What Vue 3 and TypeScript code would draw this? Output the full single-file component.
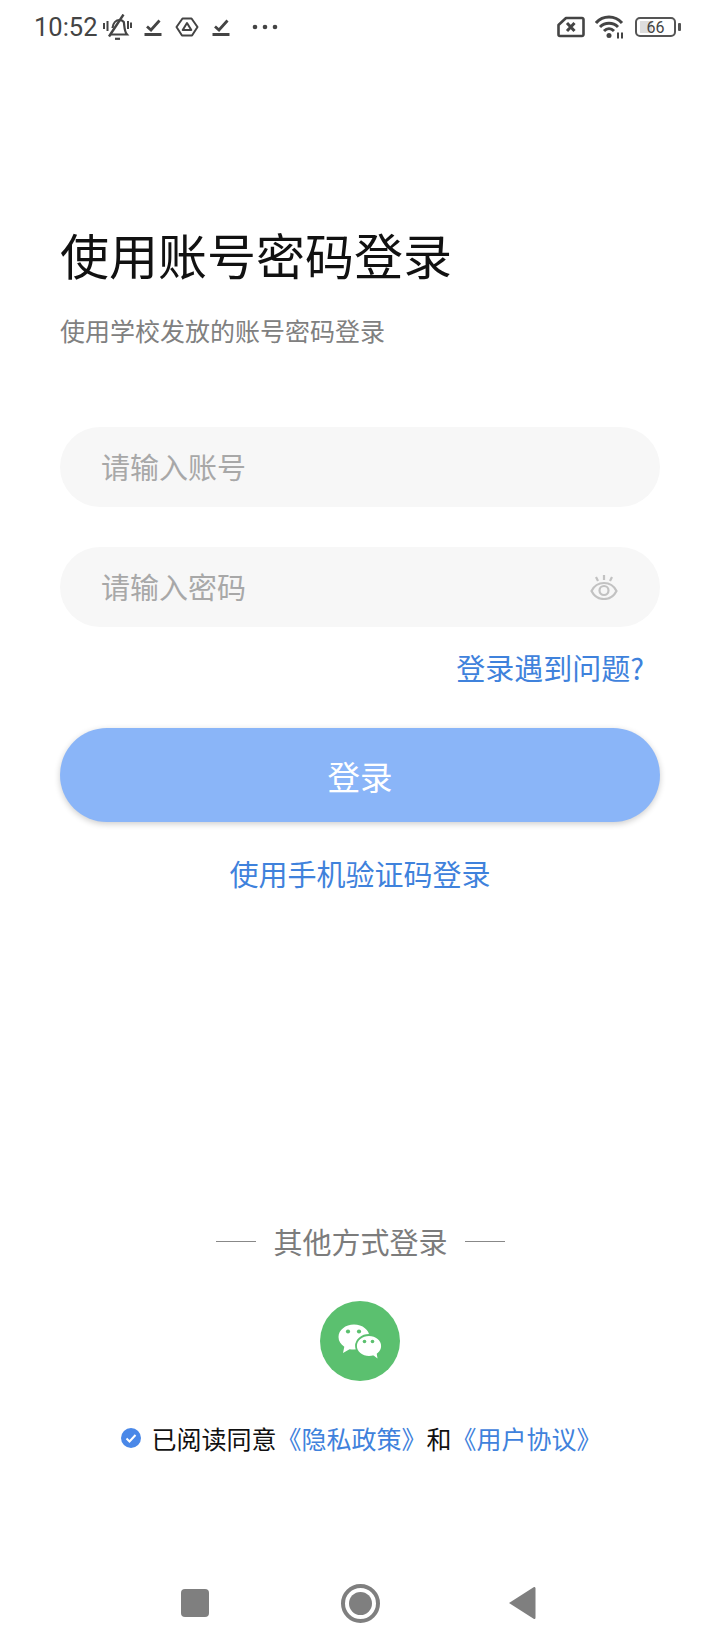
<script setup lang="ts">
// login screen, static
</script>

<template>
  <div class="page">
    <div class="status">
      <span class="time">10:52</span>
      <svg class="bell" width="30" height="26" viewBox="0 0 30 26">
        <g fill="none" stroke="#444">
          <path d="M10.500 14c.5-5 3.500-8 7-8 2 0 3.300.8 4.300 2 .8 4 .2 9 3.200 12.500H8.500" stroke-width="2.200"/>
          <path d="M21.500 .5 7 22.500" stroke-width="2.400"/>
          <path d="M13 24.800h5" stroke-width="2.200"/>
          <path d="M2 9v6M5.500 7v10M26 7v8M29 8.500v5.500" stroke-width="2"/>
        </g>
      </svg>
      <svg class="check" width="20" height="20" viewBox="0 0 20 20"><path d="M4 9.500l4 3.500L16.500 3.500" fill="none" stroke="#444" stroke-width="2.800"/><path d="M1.500 17.500h17" stroke="#444" stroke-width="3"/></svg>
      <svg class="tri" width="24" height="24" viewBox="0 0 24 24"><path d="M7.500 3.500h9l6 8.500-5.500 8.500H7L1.500 12z" fill="none" stroke="#444" stroke-width="2" stroke-linejoin="round"/><path d="M12 8l4.300 7H7.700z" fill="none" stroke="#444" stroke-width="2" stroke-linejoin="round"/></svg>
      <svg class="check2" width="20" height="20" viewBox="0 0 20 20"><path d="M4 9.500l4 3.500L16.500 3.500" fill="none" stroke="#444" stroke-width="2.800"/><path d="M1.500 17.500h17" stroke="#444" stroke-width="3"/></svg>
      <svg class="dots" width="26" height="8" viewBox="0 0 26 8"><circle cx="3" cy="4" r="2.300" fill="#444"/><circle cx="13" cy="4" r="2.300" fill="#444"/><circle cx="23" cy="4" r="2.300" fill="#444"/></svg>
      <div class="spacer"></div>
      <svg width="28" height="22" viewBox="0 0 28 22"><path d="M9 2h16a1.500 1.500 0 0 1 1.500 1.500v15a1.500 1.500 0 0 1-1.500 1.500H3a1.500 1.500 0 0 1-1.500-1.500V9z" fill="none" stroke="#444" stroke-width="2.600" stroke-linejoin="round"/><path d="M10 7l7.500 8M17.500 7L10 15" stroke="#444" stroke-width="3"/></svg>
      <svg class="wifi" width="30" height="24" viewBox="0 0 30 24"><path d="M1 8C8 0 20 0 27 8M5 12c5-5 13-5 18 0M9 16c3-3 7-3 10 0" fill="none" stroke="#444" stroke-width="3"/><circle cx="14" cy="20.500" r="2.500" fill="#444"/><path d="M23 17.500v6M27 17.500v6" stroke="#444" stroke-width="2"/></svg>
      <div class="battery"><span class="fill"></span><span class="lvl">66</span></div>
      <span class="nub"></span>
    </div>

    <main class="main">
      <h1 class="title">使用账号密码登录</h1>
      <p class="sub">使用学校发放的账号密码登录</p>
      <div class="field first"><span>请输入账号</span></div>
      <div class="field second">
        <span>请输入密码</span>
        <svg width="28" height="26" viewBox="0 0 28 26"><g fill="none" stroke="#c2c2c2" stroke-width="2.200"><path d="M1.500 17C4 12 9 9 14 9s10 3 12.500 8C24 22 19 25 14 25S4 22 1.500 17z"/><circle cx="14" cy="16.500" r="4.500"/><path d="M14 1v5M6 3l2 4M22 3l-2 4"/></g></svg>
      </div>
      <a class="trouble">登录遇到问题?</a>
      <button class="login">登录</button>
      <a class="sms">使用手机验证码登录</a>
    </main>

    <section class="other">
      <div class="divider"><i></i><span>其他方式登录</span><i></i></div>
      <div class="wechat">
        <svg width="44" height="35" viewBox="0 0 44 35">
          <path d="M16 .5C7.500.5.500 6 .500 13c0 4 2.300 7.400 5.800 9.700L5 29l6.500-3.700c1.400.2 3 .3 4.500.3 8.500 0 15.500-5.600 15.500-12.600S24.500.5 16 .5z" fill="#fff"/>
          <ellipse cx="31" cy="22" rx="13" ry="11" fill="#fff" stroke="#5bc06f" stroke-width="1.800"/>
          <path d="M35 31l4.500 3.500-1-6z" fill="#fff"/>
          <circle cx="10" cy="7.500" r="2.100" fill="#5bc06f"/><circle cx="21" cy="7.500" r="2.100" fill="#5bc06f"/>
          <circle cx="26.500" cy="17.500" r="1.800" fill="#5bc06f"/><circle cx="34.500" cy="17.500" r="1.800" fill="#5bc06f"/>
        </svg>
      </div>
      <div class="agree">
        <svg width="20" height="20" viewBox="0 0 20 20"><circle cx="10" cy="10" r="10" fill="#4a88e8"/><path d="M5.500 10.500l3 3L14.500 7" fill="none" stroke="#fff" stroke-width="2"/></svg>
        <span>已阅读同意<b>《隐私政策》</b>和<b>《用户协议》</b></span>
      </div>
    </section>

    <nav class="nav">
      <span class="square"></span>
      <span class="ring"><i></i></span>
      <svg width="28" height="34" viewBox="0 0 28 34"><path d="M26 1c1 0 1.500.5 1.500 1.500v29c0 1-.5 1.500-1.500 1.500L1 17z" fill="#7f7f7f"/></svg>
    </nav>
  </div>
</template>

<style>
html, body { margin: 0; background: #fff; }
</style>

<style scoped>
.page { width: 720px; height: 1650px; display: flex; flex-direction: column; background: #fff; font-family: "Noto Sans CJK SC", "Noto Sans", sans-serif; }
.status { height: 54px; padding: 0 39px 0 34px; display: flex; align-items: center; box-sizing: border-box; color: #444; }
.time { font-family: Roboto, sans-serif; font-size: 25.500px; line-height: 56px; color: #444; }
.bell { margin-left: 4px; }
.check { margin-left: 11px; }
.tri { margin-left: 12px; }
.check2 { margin-left: 12px; }
.dots { margin-left: 21px; }
.spacer { flex: 1; }
.wifi { margin-left: 10px; }
.battery { box-sizing: border-box; width: 41px; height: 20px; margin-left: 10px; border: 2px solid #555; border-radius: 5px; position: relative; display: flex; align-items: center; justify-content: center; }
.fill { position: absolute; left: 3px; top: 2px; bottom: 2px; width: 12px; background: #ddd; }
.lvl { position: relative; font-family: Roboto, sans-serif; font-size: 16px; color: #444; }
.nub { width: 3px; height: 8px; margin-left: 2px; background: #555; border-radius: 1px; }
.main { padding: 167px 60px 0; display: flex; flex-direction: column; }
.title { margin: 0; font-size: 49px; font-weight: 400; line-height: 66px; color: #111; }
.sub { margin: 25px 0 0; font-size: 25px; line-height: 36px; color: #808080; }
.field { height: 80px; border-radius: 40px; background: #f7f7f7; padding: 0 41px; display: flex; align-items: center; justify-content: space-between; font-size: 29px; line-height: 78px; color: #a8a8a8; }
.field span { margin-top: -2px; }
.field svg { margin-right: 1px; }
.first { margin-top: 79px; }
.second { margin-top: 40px; }
.trouble { align-self: flex-end; margin: 20px 16px 0 0; font-size: 29px; line-height: 40px; color: #3f82dc; }
.login { margin-top: 41px; height: 94px; border: none; border-radius: 47px; background: #8ab5f8; color: #fff; font-family: inherit; font-size: 32.500px; box-shadow: 0 2px 6px rgba(0,0,0,.2); }
.sms { align-self: center; margin-top: 31px; font-size: 29px; line-height: 40px; color: #3f82dc; }
.other { position: absolute; left: 0; right: 0; top: 1218px; display: flex; flex-direction: column; align-items: center; }
.divider { display: flex; align-items: center; gap: 17px; margin-left: 1px; font-size: 29px; line-height: 46px; color: #7c7c7c; }
.divider i { width: 40px; height: 1px; background: #888; }
.wechat { margin-top: 37px; width: 80px; height: 80px; border-radius: 50%; background: #5bc06f; display: flex; align-items: center; justify-content: center; }
.agree { margin-top: 39px; margin-left: 3px; display: flex; align-items: center; gap: 10px; font-size: 25px; line-height: 36px; color: #111; }
.agree b { font-weight: 400; color: #3f82dc; }
.nav { position: absolute; left: 0; right: 0; top: 1578px; height: 50px; display: flex; align-items: center; }
.square { margin-left: 181px; width: 28px; height: 28px; border-radius: 4px; background: #7f7f7f; }
.ring { margin-left: 132px; width: 39px; height: 39px; border: 4px solid #7f7f7f; border-radius: 50%; box-sizing: border-box; display: flex; align-items: center; justify-content: center; }
.ring i { width: 23px; height: 23px; border-radius: 50%; background: #7f7f7f; }
.nav svg { margin-left: 128px; }
</style>
